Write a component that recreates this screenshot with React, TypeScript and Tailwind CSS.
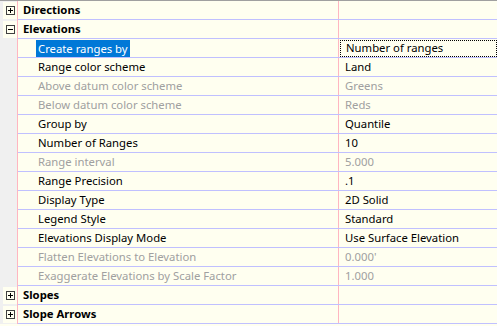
type Row =
  | { kind: "cat"; label: string; open: boolean }
  | { kind: "prop"; label: string; value: string; disabled?: boolean; selected?: boolean };

const rows: Row[] = [
  { kind: "cat", label: "Directions", open: false },
  { kind: "cat", label: "Elevations", open: true },
  { kind: "prop", label: "Create ranges by", value: "Number of ranges", selected: true },
  { kind: "prop", label: "Range color scheme", value: "Land" },
  { kind: "prop", label: "Above datum color scheme", value: "Greens", disabled: true },
  { kind: "prop", label: "Below datum color scheme", value: "Reds", disabled: true },
  { kind: "prop", label: "Group by", value: "Quantile" },
  { kind: "prop", label: "Number of Ranges", value: "10" },
  { kind: "prop", label: "Range interval", value: "5.000", disabled: true },
  { kind: "prop", label: "Range Precision", value: ".1" },
  { kind: "prop", label: "Display Type", value: "2D Solid" },
  { kind: "prop", label: "Legend Style", value: "Standard" },
  { kind: "prop", label: "Elevations Display Mode", value: "Use Surface Elevation" },
  { kind: "prop", label: "Flatten Elevations to Elevation", value: "0.000'", disabled: true },
  { kind: "prop", label: "Exaggerate Elevations by Scale Factor", value: "1.000", disabled: true },
  { kind: "cat", label: "Slopes", open: false },
  { kind: "cat", label: "Slope Arrows", open: false },
];

function ExpandBox({ open }: { open: boolean }) {
  return (
    <svg width="9" height="9" viewBox="0 0 9 9" className="block">
      <rect x="0.5" y="0.5" width="8" height="8" fill="#fffff0" stroke="#404040" />
      <line x1="2" y1="4.5" x2="7" y2="4.5" stroke="#000" />
      {!open && <line x1="4.5" y1="2" x2="4.5" y2="7" stroke="#000" />}
    </svg>
  );
}

export default function App() {
  return (
    <div
      className="w-[497px] h-[326px] overflow-hidden bg-[#fffff0] border-t border-[#a0a0a0] text-[11.3px]"
      style={{ fontFamily: '"Segoe UI", "Noto Sans", "Open Sans", sans-serif' }}
    >
      {rows.map((r, i) => (
        <div key={i} className="flex h-[19px]">
          <div className="w-[17px] h-[19px] bg-[#f0f0f0] shrink-0">
            {r.kind === "cat" && (
              <div className="ml-[3px] w-[14px] h-[17px] mt-[1px] bg-[#fffff0] flex items-center justify-center">
                <ExpandBox open={r.open} />
              </div>
            )}
          </div>
          <div className="w-px bg-[#ffb6c1] shrink-0" />
          <div className="flex flex-1 border-b border-[#c0c0ff]">
            <div className="w-[320px] shrink-0 flex items-center pt-[1px]">
              {r.kind === "cat" ? (
                <span className="pl-[5px] font-bold text-black">{r.label}</span>
              ) : (
                <span
                  className={
                    r.selected
                      ? "ml-[18px] px-[2px] h-[17px] leading-[17px] bg-[#0078d7] text-white"
                      : r.disabled
                        ? "ml-[20px] text-[#a0a0a0]"
                        : "ml-[20px] text-black"
                  }
                >
                  {r.label}
                </span>
              )}
            </div>
            <div className="w-px bg-[#ffb6c1] shrink-0" />
            <div className="flex-1 flex items-center pt-[1px]">
              {r.kind === "prop" &&
                (r.selected ? (
                  <div className="ml-[1px] flex-1 h-[17px] border border-dotted border-black flex items-center pl-[5px] text-black">
                    {r.value}
                  </div>
                ) : (
                  <span className={r.disabled ? "pl-[6px] text-[#a0a0a0]" : "pl-[6px] text-black"}>
                    {r.value}
                  </span>
                ))}
            </div>
          </div>
        </div>
      ))}
    </div>
  );
}
